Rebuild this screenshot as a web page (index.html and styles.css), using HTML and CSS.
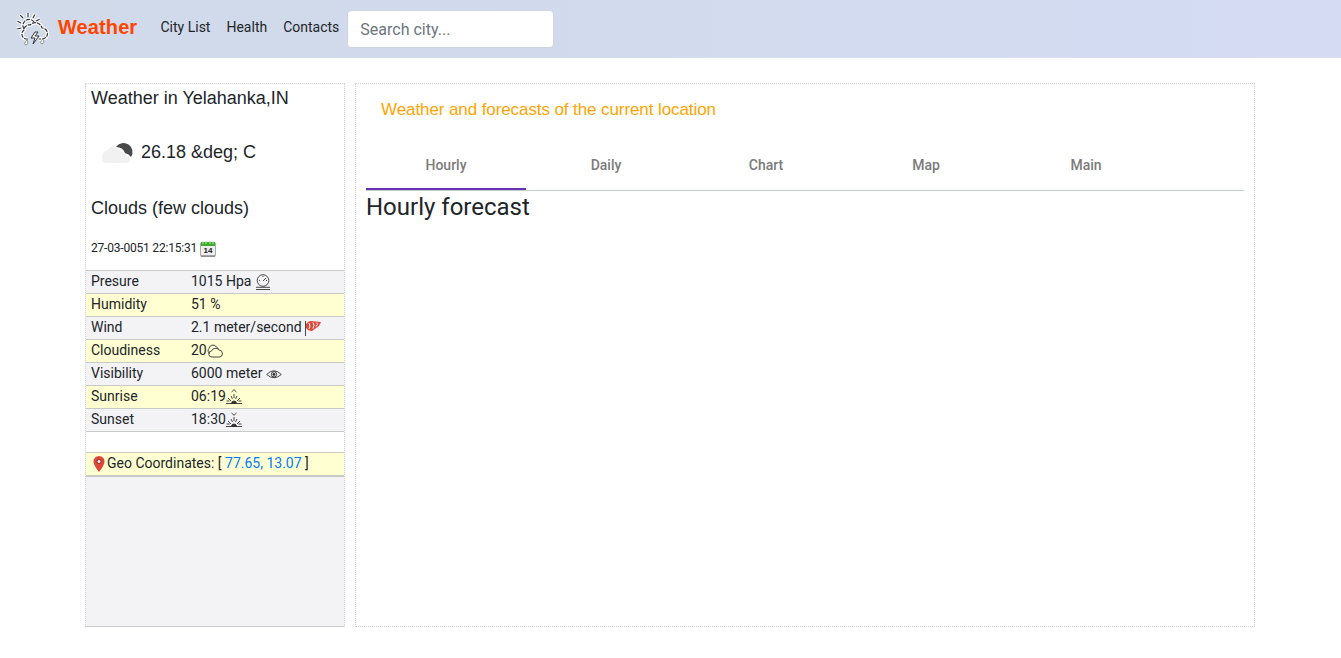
FILE: index.html
```
<!DOCTYPE html>
<html lang="en">
<head>
<meta charset="utf-8">
<title>Weather</title>
<link rel="stylesheet" href="styles.css">
</head>
<body>
<header class="navbar">
  <svg class="logo" viewBox="0 0 34 34">
    <g class="logo-halo">
      <path d="M8 17a6 6 0 1 1 10-7M12 5V1M7 6L4 3M5 11L1 9M5 16l-4 1M17 6l2-4M20 9l4-2"/>
      <path d="M12 27H10a5 5 0 0 1-2-9 5 5 0 0 1 6-5 7 7 0 0 1 12 3 5.500 5.500 0 0 1 0 11h-3"/>
    </g>
    <g class="logo-line">
      <path d="M8 17a6 6 0 1 1 10-7M12 5V1M7 6L4 3M5 11L1 9M5 16l-4 1M17 6l2-4M20 9l4-2"/>
      <path d="M12 27H10a5 5 0 0 1-2-9 5 5 0 0 1 6-5 7 7 0 0 1 12 3 5.500 5.500 0 0 1 0 11h-3"/>
    </g>
    <path class="logo-bolt" d="M19 20l-4 6h4l-2 6 6-8h-4l3-4z"/>
    <path class="logo-drop" d="M11 28q-4 4-1 5 3-1 1-5zM27 27q-4 4-1 5 3-1 1-5z"/>
  </svg>
  <a class="brand">Weather</a>
  <nav class="links"><a>City List</a><a>Health</a><a>Contacts</a></nav>
  <input class="search" type="text" placeholder="Search city...">
</header>
<main class="layout">
  <aside class="panel current">
    <section class="summary">
      <h1 class="place">Weather in Yelahanka,IN</h1>
      <div class="temp">
        <svg class="cloud" viewBox="0 0 50 50">
          <path d="M25 20a8 8 0 1 1 15 10q-2-3-6-4-2-6-9-6z" fill="#48484a"/>
          <path d="M14 36a5 5 0 0 1-2-8 5 5 0 0 1 5-5q3-5 8-3 4 1 5 5 4 0 5 4 5 1 4 4-1 3-4 3z" fill="#f1f1f1"/>
        </svg>
        <span>26.18 &amp;deg; C</span>
      </div>
      <div class="state">Clouds (few clouds)</div>
      <div class="date"><span class="stamp">27-03-0051 22:15:31</span>
        <svg class="calendar" viewBox="0 0 16 16">
          <rect x=".5" y="1.500" width="15" height="14" rx="1" fill="#eee" stroke="#aaa"/>
          <path d="M1 1h14v4H1z" fill="#3dae2b"/><path d="M3 0v3M6 0v3M10 0v3M13 0v3" stroke="#b7e3a8"/>
          <path d="M1 15h14" stroke="#888" stroke-width="1.500"/>
          <text class="calendar-day" x="8" y="12">14</text>
        </svg>
      </div>
    </section>
    <dl class="facts">
      <div class="row"><dt>Presure</dt><dd>1015 Hpa <svg class="icon" viewBox="0 0 16 16"><circle cx="8" cy="6.500" r="5.800"/><path d="M8 7l3-3M8 2v1M4 6.500h1M11 6.500h1M1 13.300h14M1 15.500h14"/></svg></dd></div>
      <div class="row alt"><dt>Humidity</dt><dd>51 %</dd></div>
      <div class="row"><dt>Wind</dt><dd>2.1 meter/second <svg class="icon" viewBox="0 0 16 16"><path d="M.5 1v15"/><path d="M1 4q2-3 5-3l10 1-2 4-7 5q-4 0-6-3z" fill="#df4a3c" stroke="none"/><path d="M4 3q2 3 0 6M8 2.500q2 3 0 6M12 2.500q1 2-1 4" stroke="#fff" stroke-width="1"/></svg></dd></div>
      <div class="row alt"><dt>Cloudiness</dt><dd>20<svg class="icon" viewBox="0 0 16 16"><path d="M5 14a3 3 0 0 1-.5-6 4.300 4.300 0 0 1 7.500-1 3.600 3.600 0 0 1 1 7zM3 10.500A3 3 0 0 1 2 5.500a4 4 0 0 1 7-2q2 1 2.500 3"/></svg></dd></div>
      <div class="row"><dt>Visibility</dt><dd>6000 meter <svg class="icon" viewBox="0 0 16 16"><path d="M.7 8.500q7-7.500 14.600 0-7.300 6.500-14.600 0z"/><circle cx="8" cy="8.300" r="2.700"/><circle cx="8" cy="8.300" r="1.100" fill="#222"/></svg></dd></div>
      <div class="row alt"><dt>Sunrise</dt><dd>06:19<svg class="icon" viewBox="0 0 16 16"><path d="M5.500 3L8 .7 10.500 3M8 5v4M2 9l3 3M14 9l-3 3M5 7l1.500 3M11 7l-1.500 3M0 14.500h16M.5 12h3M12.500 12h3"/><path d="M5.500 14.500a2.500 2.500 0 0 1 5 0z" fill="#333"/></svg></dd></div>
      <div class="row"><dt>Sunset</dt><dd>18:30<svg class="icon" viewBox="0 0 16 16"><path d="M5.500 1L8 3.300 10.500 1M8 5v4M2 9l3 3M14 9l-3 3M5 7l1.500 3M11 7l-1.500 3M0 14.500h16M.5 12h3M12.500 12h3"/><path d="M5.500 14.500a2.500 2.500 0 0 1 5 0z" fill="#333"/></svg></dd></div>
    </dl>
    <div class="row alt geo">
      <svg class="pin" viewBox="0 0 16 16"><path d="M8 16Q2.500 9 2.500 5.500a5.500 5.500 0 0 1 11 0Q13.500 9 8 16z" fill="#df4538"/><circle cx="8" cy="5.500" r="2" fill="#fff" stroke="#8b2820"/></svg>
      <span>Geo Coordinates: [ <a class="coords">77.65, 13.07</a> ]</span>
    </div>
  </aside>
  <section class="panel forecast">
    <h2 class="title">Weather and forecasts of the current location</h2>
    <div class="tabs"><a class="tab active">Hourly</a><a class="tab">Daily</a><a class="tab">Chart</a><a class="tab">Map</a><a class="tab">Main</a></div>
    <h3 class="heading">Hourly forecast</h3>
  </section>
</main>
</body>
</html>
```
FILE: styles.css
```
* { box-sizing: border-box; }
body { margin: 0; background: #fff; color: #212529; font: 14px/20px Roboto, sans-serif; }
h1, h2, h3, dl, dd { margin: 0; font-weight: 400; }

.navbar { display: flex; height: 58px; padding: 10px 16px 0; background: linear-gradient(90deg, #d0dae9, #d4dbf3); border-bottom: 1px solid #d9dfe8; }
.logo { width: 34px; height: 34px; margin-top: 2px; fill: none; }
.logo-halo { stroke: #fff; stroke-width: 3.500; }
.logo-line { stroke: #303438; stroke-width: 1.200; stroke-dasharray: 4 1; }
.logo-bolt { fill: #fff; stroke: #303438; }
.logo-drop { fill: #fff; stroke: #777; stroke-width: .8; }
.brand { width: 79px; margin: 2px 0 0 8px; font: bold 20px/30px "Liberation Sans", sans-serif; letter-spacing: .1px; color: #ff4500; white-space: nowrap; }
.links { display: flex; gap: 16px; margin: 7px 0 0 23.500px; white-space: nowrap; }
.search { width: 207px; height: 38px; margin-left: 8px; padding: 6px 12px; border: 1px solid #ced4da; border-radius: 4px; background: #fff; font: 16px/24px Roboto, sans-serif; }
.search::placeholder { color: #6c757d; opacity: 1; }

.layout { display: flex; gap: 10px; width: 1170px; margin: 25px 0 0 85px; }
.panel { height: 544px; border: 1px dotted #ced6dc; }
.current { width: 260px; background: #f3f3f6; border-bottom: 1px solid #ccc; }
.summary { height: 187px; padding-left: 5px; background: #fff; border-bottom: 1px solid #c6cbc8; }
.place, .temp, .state { font: 18px/28px "Liberation Sans", sans-serif; }
.temp { display: flex; align-items: center; height: 50px; margin-top: 15px; }
.cloud { width: 50px; height: 50px; }
.state { margin-top: 17px; }
.date { display: flex; align-items: center; gap: 3px; margin-top: 16px; font-size: 12px; }
.stamp { letter-spacing: -.2px; }
.calendar { width: 16px; height: 16px; margin-top: 2px; }
.calendar-day { font: bold 8px "Liberation Sans", sans-serif; text-anchor: middle; fill: #222; }
.row { display: flex; height: 23px; padding: 0 5px; line-height: 21px; border-bottom: 1px solid #c6cbc8; background: #f3f3f6; white-space: nowrap; }
.row dt { width: 100px; }
.alt { background: #ffffd2; }
.icon { width: 16px; height: 16px; vertical-align: -4px; fill: none; stroke: #333; stroke-width: .9; }
.geo { height: 45px; border-top: 20px solid #fff; border-bottom: 2px solid #c6cbc8; box-shadow: inset 0 1px #c6cbc8; line-height: 22px; }
.pin { width: 16px; height: 16px; margin-top: 4px; }
.coords { color: #007bff; }

.forecast { width: 900px; padding: 0 10px; }
.title { padding: 10px 15px 0; font: 17px/31px "Liberation Sans", sans-serif; letter-spacing: -.09px; color: #ffa500; }
.tabs { display: flex; height: 49px; margin-top: 17px; border-bottom: 1px solid #c6cec8; }
.tab { width: 160px; height: 48px; font-weight: 500; line-height: 47px; text-align: center; color: #7b7b7b; }
.active { border-bottom: 2px solid #6530b2; }
.heading { font: 24px/32px Roboto, sans-serif; }
```
